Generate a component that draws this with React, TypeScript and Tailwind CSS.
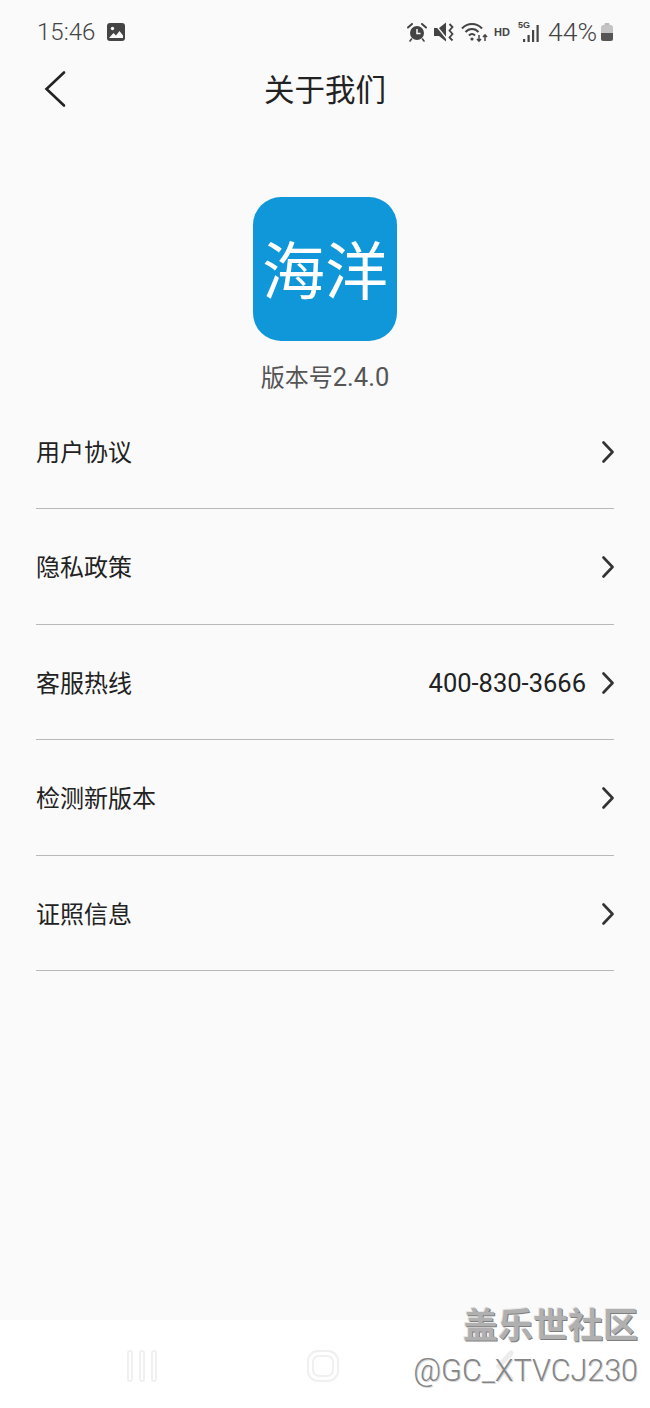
import React from 'react';

const cjk = "font-['Noto_Sans_CJK_SC','Noto_Sans',sans-serif]";

const Chevron: React.FC = () => (
  <svg width="14" height="24" viewBox="0 0 14 24" fill="none" stroke="#333" strokeWidth="2.6" strokeLinecap="round" strokeLinejoin="round">
    <path d="M3.5 2.5l9 9.5-9 9.5" />
  </svg>
);

const StatusIcons: React.FC = () => (
  <div className="flex items-center text-[#4a4a4a]">
    {/* alarm */}
    <svg width="20" height="20" viewBox="0 0 20 20" className="mr-[7px]">
      <circle cx="10" cy="11" r="7" fill="#444" />
      <path d="M10 7v4.5h3.5" stroke="#fafafa" strokeWidth="1.5" fill="none" />
      <path d="M1 5.5L5 2M19 5.5L15 2" stroke="#444" strokeWidth="2" strokeLinecap="round" />
      <path d="M4.5 17l-1.5 2M15.5 17l1.5 2" stroke="#444" strokeWidth="1.6" strokeLinecap="round" />
    </svg>
    {/* mute with vibrate */}
    <svg width="20" height="20" viewBox="0 0 20 20" className="mr-[7px]">
      <path d="M0 6h5l7-5.5v19L5 14H0z" fill="#444" />
      <path d="M0 1l13 16" stroke="#fafafa" strokeWidth="1.4" />
      <path d="M15.5 2l3 3-3 3.5 3 3.5-3 3.5 3 3" stroke="#444" strokeWidth="1.8" fill="none" />
    </svg>
    {/* wifi */}
    <svg width="27" height="22" viewBox="0 0 27 22" fill="none" stroke="#444" className="mr-[6px]">
      <path d="M1 7.5C6.5 1.5 15.5 1.5 21 7.5" strokeWidth="2" />
      <path d="M4.5 11C8 7 14 7 17.5 11" strokeWidth="2" />
      <path d="M8 14.5c1.8-2 4.2-2 6 0" strokeWidth="2" />
      <circle cx="11" cy="18" r="1.6" fill="#444" stroke="none" />
      <path d="M18 14v6M16 18l2 2.2 2-2.2M24 20v-6M22 16l2-2.2 2 2.2" strokeWidth="1.5" />
    </svg>
    <span className="mr-[8px] font-['Liberation_Sans',sans-serif] text-[11px] leading-none font-bold text-[#444]">HD</span>
    <div className="relative mr-[8px] h-[22px] w-[22px]">
      <span className="absolute top-0 left-0 font-['Liberation_Sans',sans-serif] text-[9px] leading-none font-bold text-[#444]">5G</span>
      <svg width="22" height="22" viewBox="0 0 22 22" fill="#444" className="absolute top-0 left-0">
        <rect x="5" y="18" width="2.2" height="3" />
        <rect x="9.5" y="14" width="2.2" height="7" />
        <rect x="14" y="9" width="2.2" height="12" />
        <rect x="18.5" y="4" width="2.2" height="17" />
      </svg>
    </div>
    <span className="mr-[3px] font-['Roboto',sans-serif] text-[26.5px] leading-none font-light text-[#444]">44%</span>
    <svg width="14" height="20" viewBox="0 0 14 20">
      <rect x="4.5" y="1" width="5" height="3" rx="1" fill="#bbb" />
      <rect x="1" y="3" width="12" height="16" rx="2.5" fill="#c4c4c4" />
      <path d="M1 11h12v5.5a2.5 2.5 0 0 1-2.5 2.5h-7A2.5 2.5 0 0 1 1 16.5z" fill="#555" />
    </svg>
  </div>
);

const rows = [
  { label: '用户协议' },
  { label: '隐私政策' },
  { label: '客服热线', value: '400-830-3666' },
  { label: '检测新版本' },
  { label: '证照信息' },
];

const App: React.FC = () => {
  return (
    <div className={`relative flex h-[1408px] w-[650px] flex-col overflow-hidden bg-[#fafafa] ${cjk}`}>
      {/* Status bar */}
      <div className="flex h-[60px] shrink-0 items-center justify-between pt-[4px] pr-[36px] pl-[37px]">
        <div className="flex items-center gap-[11px]">
          <span className="font-['Roboto',sans-serif] text-[24px] leading-none font-light text-[#444]">15:46</span>
          <svg width="20" height="20" viewBox="0 0 20 20">
            <rect x="1" y="1" width="18" height="18" rx="3" fill="#444" />
            <circle cx="6.5" cy="6.5" r="1.7" fill="#fafafa" />
            <path d="M3 16l4.5-5 2.5 2.5 3.5-4.5L17 13.5V16z" fill="#fafafa" />
          </svg>
        </div>
        <StatusIcons />
      </div>

      {/* Header */}
      <div className="relative flex h-[60px] shrink-0 items-center justify-center pb-[4px]">
        <h1 className="text-[30.5px] leading-none font-normal text-[#222]">关于我们</h1>
        <svg width="24" height="38" viewBox="0 0 24 38" fill="none" stroke="#222" strokeWidth="2.6" strokeLinecap="round" className="absolute top-[10px] left-[43px]">
          <path d="M21 2.5L3.5 19 21 35.5" />
        </svg>
      </div>

      {/* Logo */}
      <div className="mt-[77px] flex shrink-0 flex-col items-center">
        <div className="flex h-[144px] w-[144px] items-center justify-center rounded-[28px] bg-[#0f97d9] pb-[6px]">
          <span className="text-[63px] leading-none font-normal text-white">海洋</span>
        </div>
        <p className="mt-[17px] text-[24px] leading-[36px] text-[#555]">
          版本号<span className="font-['Roboto',sans-serif] text-[25.5px]">2.4.0</span>
        </p>
      </div>

      {/* Rows */}
      <div className="mt-[-1.5px] px-9">
        {rows.map((row) => (
          <div key={row.label} className="flex h-[115.5px] items-center justify-between border-b border-[#b8b8b8] pt-[2px]">
            <span className="mb-[2px] text-[24px] leading-none text-[#222]">{row.label}</span>
            <div className="flex items-center gap-[14px]">
              {row.value && <span className="mt-[1px] font-['Roboto',sans-serif] text-[25.5px] leading-none text-[#222]">{row.value}</span>}
              <Chevron />
            </div>
          </div>
        ))}
      </div>

      {/* Navigation bar */}
      <div className="mt-auto flex h-[88px] shrink-0 items-center bg-white pt-[4px]">
        <div className="ml-[127px] flex h-[32px] gap-[6px]">
          <div className="w-[6px] rounded-full border-2 border-[#f0f0f0]" />
          <div className="w-[6px] rounded-full border-2 border-[#f0f0f0]" />
          <div className="w-[6px] rounded-full border-2 border-[#f0f0f0]" />
        </div>
        <div className="ml-[150px] flex h-[32px] w-[32px] items-center justify-center rounded-[11px] border-2 border-[#f0f0f0]">
          <div className="h-[22px] w-[22px] rounded-[7px] border-2 border-[#f0f0f0]" />
        </div>
        {/* back key, mostly hidden by the watermark */}
        <svg width="20" height="32" viewBox="0 0 20 32" fill="none" stroke="#ececec" strokeWidth="5" strokeLinecap="round" className="ml-[156px]">
          <path d="M16 3L4 16l12 13" />
        </svg>
      </div>

      {/* Watermark */}
      <div className="absolute top-[1303px] right-[12px] flex flex-col items-end">
        <span className="text-[35px] leading-[40px] font-bold text-[#b0b0b0] [text-shadow:1px_1px_0_#7f7f7f,-1px_-1px_0_#e8e8e8]">盖乐世社区</span>
        <span className="mt-[7px] font-['Roboto',sans-serif] text-[30.5px] leading-[42px] font-light text-[#858585] [text-shadow:1px_1px_0_#d8d8d8]">@GC_XTVCJ230</span>
      </div>
    </div>
  );
};

export default App;
